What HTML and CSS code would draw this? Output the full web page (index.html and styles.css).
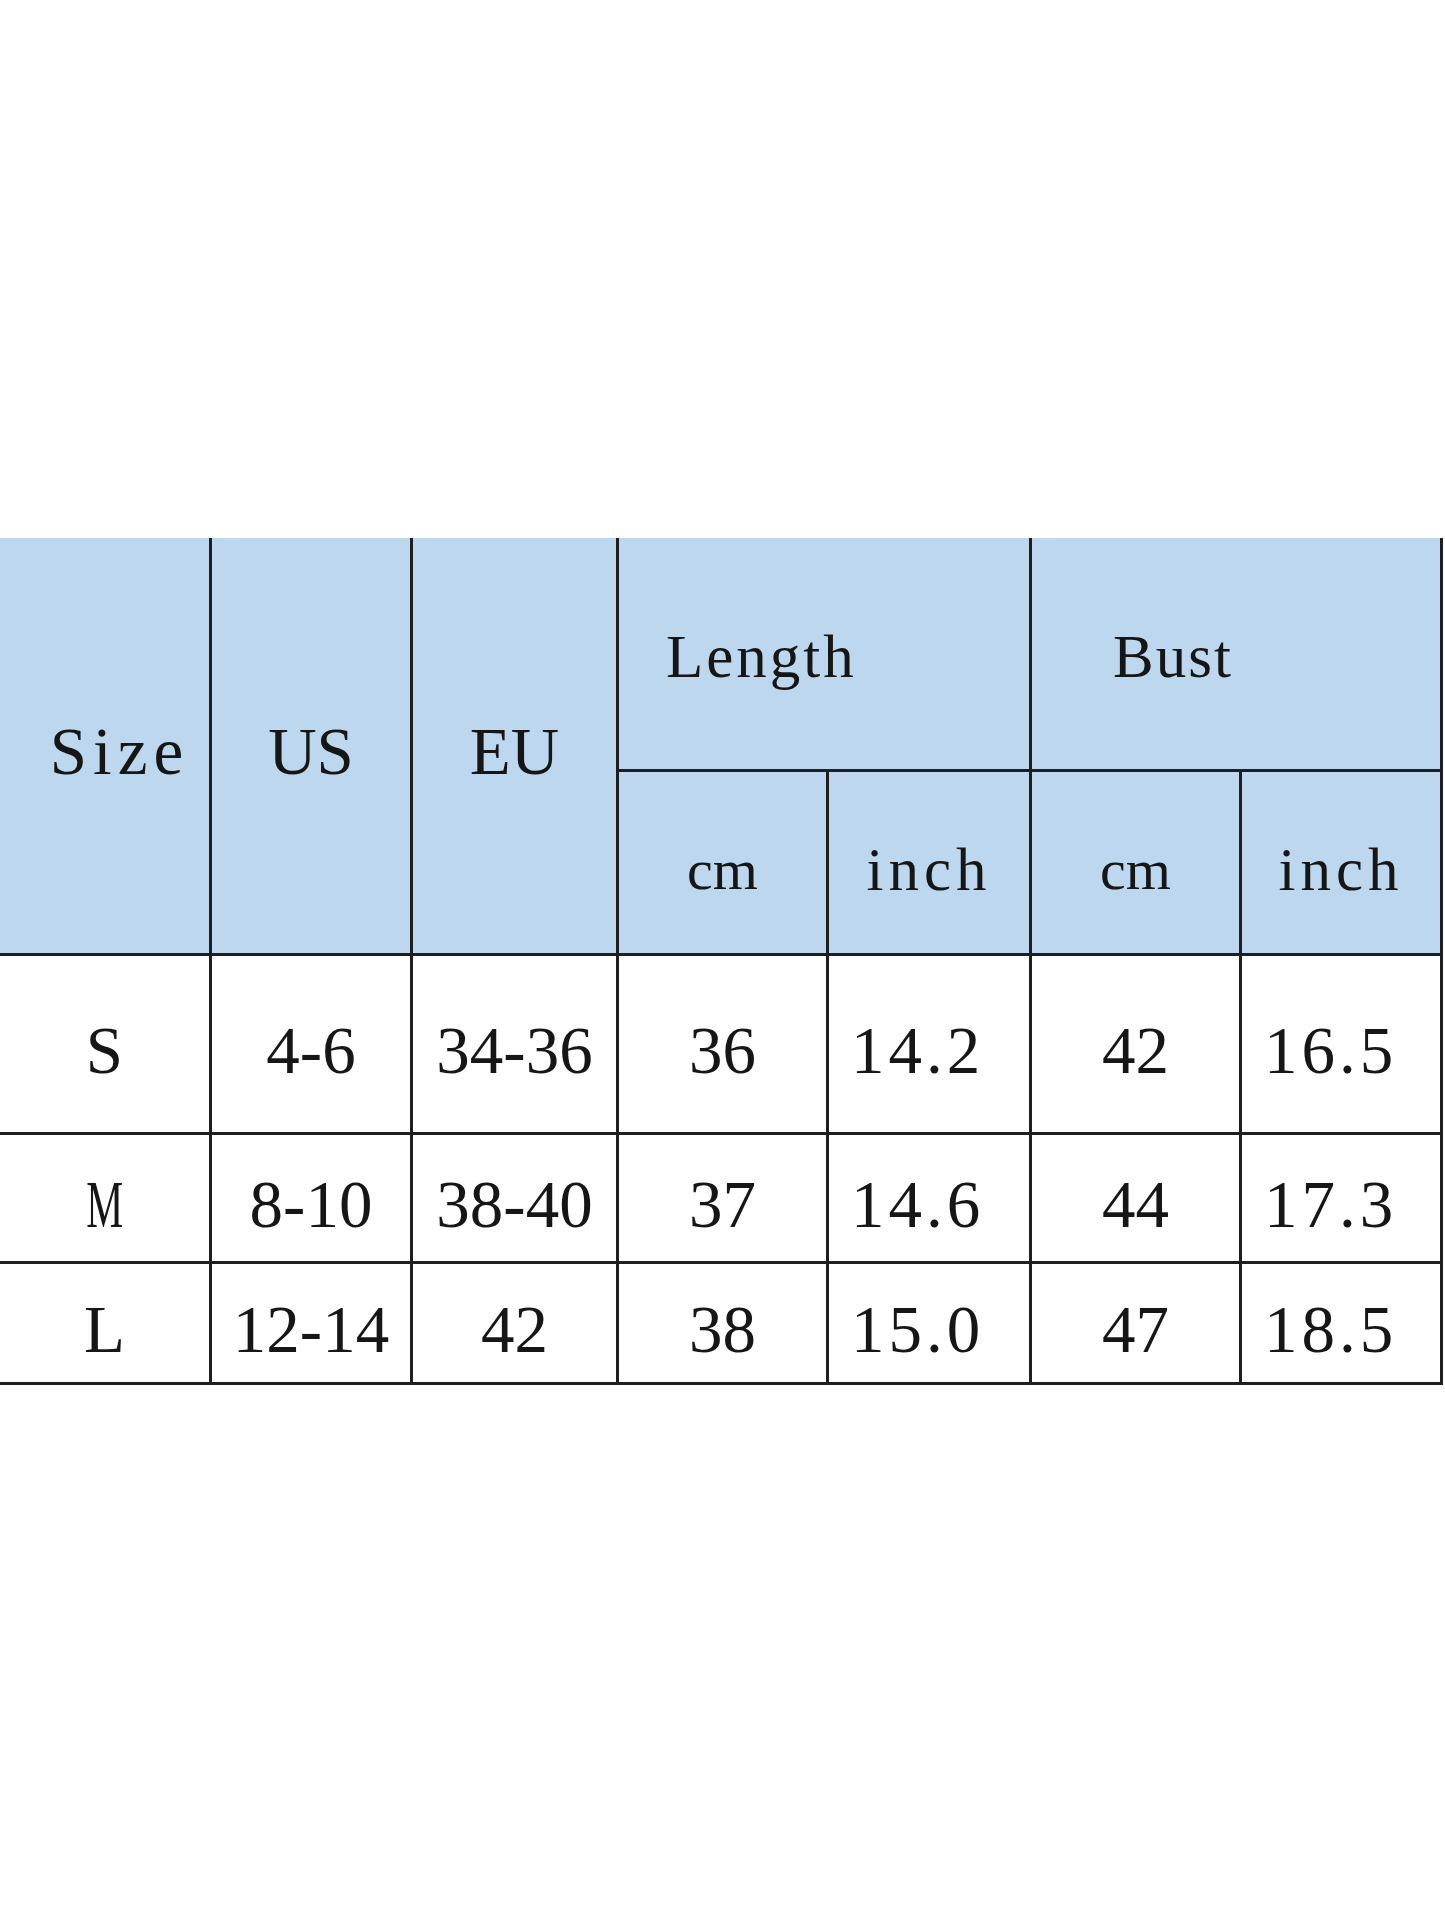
FILE: index.html
```html
<!DOCTYPE html>
<html lang="en">
<head>
<meta charset="utf-8">
<title>Size chart</title>
<link rel="stylesheet" href="styles.css">
</head>
<body>
<div class="page">
  <div class="chart">
    <div class="cell head tall size-h"><span>Size</span></div>
    <div class="cell head tall"><span>US</span></div>
    <div class="cell head tall"><span>EU</span></div>
    <div class="cell head group length-h"><span>Length</span></div>
    <div class="cell head group bust-h"><span>Bust</span></div>
    <div class="cell head sub unit-cm"><span>cm</span></div>
    <div class="cell head sub"><span>inch</span></div>
    <div class="cell head sub unit-cm"><span>cm</span></div>
    <div class="cell head sub"><span>inch</span></div>

    <div class="cell body"><span>S</span></div>
    <div class="cell body"><span>4-6</span></div>
    <div class="cell body"><span>34-36</span></div>
    <div class="cell body"><span>36</span></div>
    <div class="cell body dec"><span>14.2</span></div>
    <div class="cell body"><span>42</span></div>
    <div class="cell body dec"><span>16.5</span></div>

    <div class="cell body"><span class="narrow">M</span></div>
    <div class="cell body"><span>8-10</span></div>
    <div class="cell body"><span>38-40</span></div>
    <div class="cell body"><span>37</span></div>
    <div class="cell body dec"><span>14.6</span></div>
    <div class="cell body"><span>44</span></div>
    <div class="cell body dec"><span>17.3</span></div>

    <div class="cell body"><span>L</span></div>
    <div class="cell body"><span>12-14</span></div>
    <div class="cell body"><span>42</span></div>
    <div class="cell body"><span>38</span></div>
    <div class="cell body dec"><span>15.0</span></div>
    <div class="cell body"><span>47</span></div>
    <div class="cell body dec"><span>18.5</span></div>
  </div>
</div>
</body>
</html>
```
FILE: styles.css
```css
html, body {
  margin: 0;
  padding: 0;
  background: #ffffff;
}

.page {
  width: 1445px;
  height: 1927px;
  padding-top: 538px;
  box-sizing: border-box;
}

.chart {
  display: grid;
  grid-template-columns: 209px 198px 203px 207px 200px 207px 198px;
  grid-template-rows: 231px 181px 176px 126px 118px;
  gap: 3px;
  padding: 0 3px 3px 0;
  width: max-content;
  background: #1f1f1f;
  font-family: "Liberation Serif", "Times New Roman", serif;
  color: #161616;
}

.cell {
  display: flex;
  align-items: center;
  justify-content: center;
  box-sizing: border-box;
  padding-top: 12px;
  line-height: 1;
  white-space: nowrap;
}

.head {
  background: #bdd7ee;
}

.body {
  background: #ffffff;
  font-size: 67px;
}

.tall {
  grid-row: span 2;
  font-size: 67px;
}

.size-h {
  padding-left: 30px;
  letter-spacing: 6px;
}

.group {
  grid-column: span 2;
  font-size: 61px;
  letter-spacing: 3px;
  justify-content: flex-start;
  padding-top: 6px;
}

.length-h {
  padding-left: 47px;
}

.bust-h {
  padding-left: 81px;
  letter-spacing: 2px;
}

.sub {
  font-size: 61px;
  letter-spacing: 5px;
  padding-top: 14px;
}

.unit-cm {
  letter-spacing: 0;
  font-size: 58px;
}

.dec {
  justify-content: flex-start;
  padding-left: 22px;
  letter-spacing: 4px;
}

.narrow {
  display: inline-block;
  transform: scaleX(0.62);
}
```
